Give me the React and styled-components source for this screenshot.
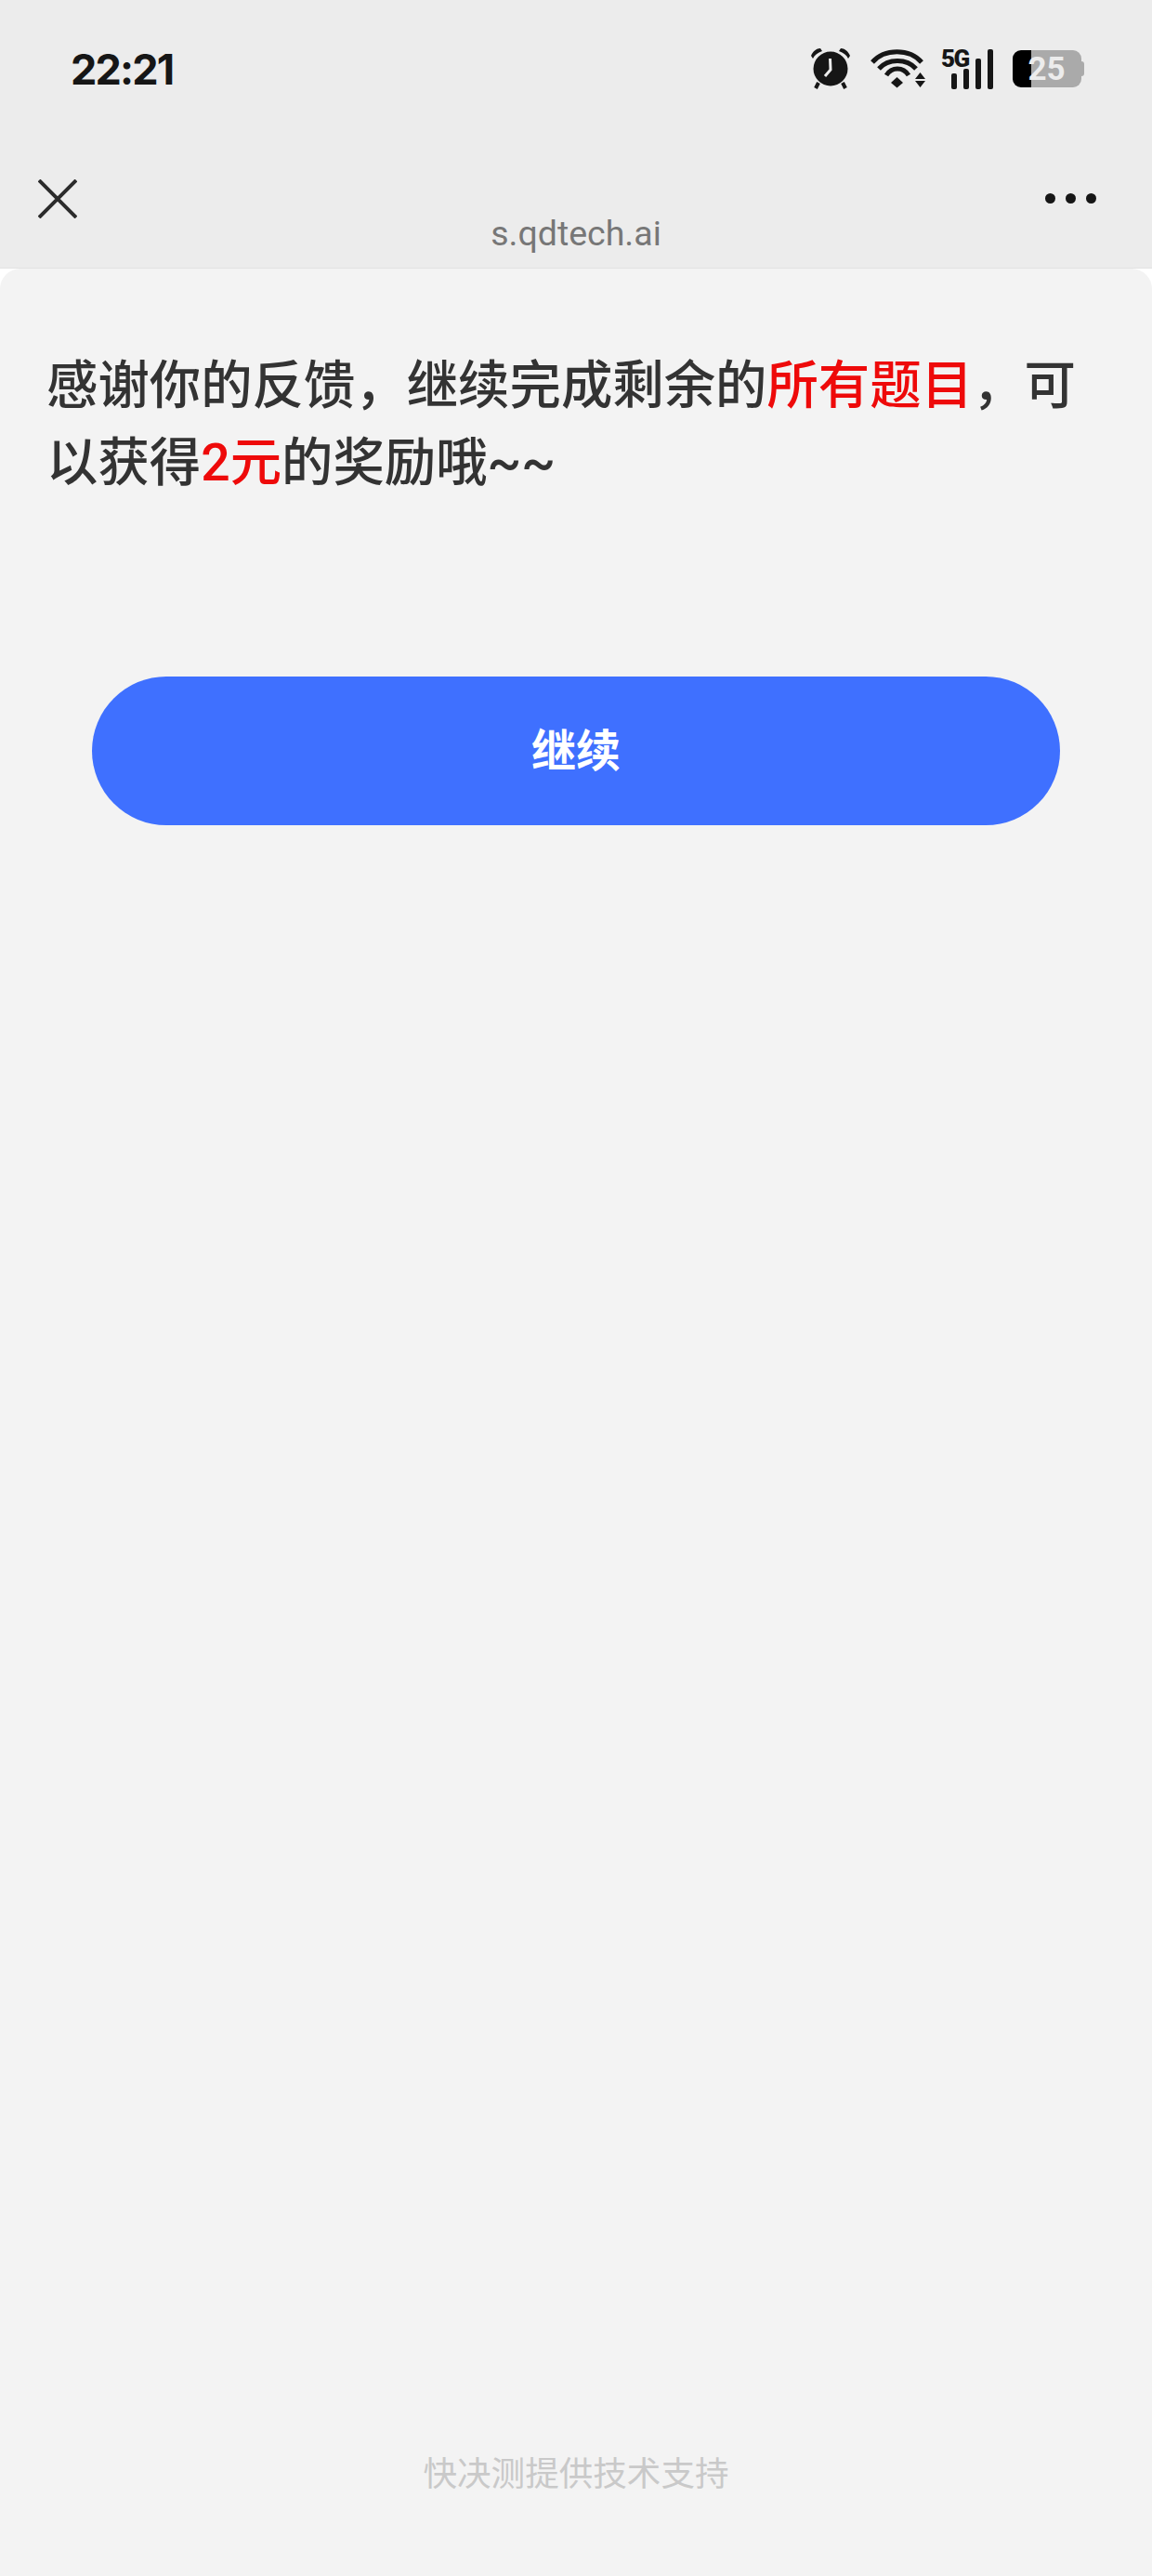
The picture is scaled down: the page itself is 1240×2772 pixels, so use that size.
import React from 'react'
import styled, { createGlobalStyle } from 'styled-components'

const GlobalStyle = createGlobalStyle`
  html, body {
    margin: 0;
    padding: 0;
    background: #ffffff;
  }
`

const CJK = `"Noto Sans CJK SC", Roboto, sans-serif`

const AlarmIcon = () => (
  <svg width="46" height="44" viewBox="0 0 46 44">
    <circle cx="23" cy="22" r="18.5" fill="#161616" />
    <path d="M22.5 11 L23 23 L17 30" fill="none" stroke="#ececec" strokeWidth="3" />
    <path d="M2 8 C4 3 8 0 12 0 L14 3 C9 5 6 7 4 11 Z" fill="#161616" />
    <path d="M44 8 C42 3 38 0 34 0 L32 3 C37 5 40 7 42 11 Z" fill="#161616" />
    <path d="M10 37 L7 43 M36 37 L39 43" stroke="#161616" strokeWidth="4" />
  </svg>
)

const WifiIcon = () => (
  <svg width="60" height="44" viewBox="0 0 60 44">
    <g fill="none" stroke="#161616" strokeWidth="5">
      <path d="M2 15 C15 0 42 0 55 15" />
      <path d="M9 22 C19 10.7 39 10.7 49 22" />
      <path d="M17 29 C23 19.7 35 19.7 41 29" />
    </g>
    <path d="M22 37 L28.5 31 L35 37 L28.5 42.5 Z" fill="#161616" />
    <path d="M48 33 L53.5 26 L59 33 Z M48 35 L59 35 L53.5 42 Z" fill="#161616" />
  </svg>
)

const SignalBars = () => (
  <svg width="46" height="43" viewBox="0 0 46 43">
    <rect x="0" y="26" width="6" height="17" rx="2" fill="#161616" />
    <rect x="13" y="21" width="6" height="22" rx="2" fill="#161616" />
    <rect x="26" y="10" width="6" height="33" rx="2" fill="#161616" />
    <rect x="39" y="0" width="6" height="43" rx="2" fill="#161616" />
  </svg>
)

const Page = styled.div`
  width: 1240px;
  height: 2772px;
  display: flex;
  flex-direction: column;
  overflow: hidden;
  background: #ffffff;
`

const Header = styled.header`
  height: 288px;
  flex-shrink: 0;
  display: flex;
  flex-direction: column;
  background: #ececec;
  border-bottom: 1px solid #e2e2e2;
`

const StatusBar = styled.div`
  height: 148px;
  padding: 0 73px 0 76px;
  display: flex;
  justify-content: space-between;
  align-items: center;
`

const Time = styled.div`
  font-family: Inter, Roboto, sans-serif;
  font-size: 45px;
  font-weight: 700;
  letter-spacing: -1.8px;
  color: #161616;
  line-height: 1;
`

const StatusIcons = styled.div`
  display: flex;
  align-items: center;
  gap: 20px;
`

const Cell = styled.div`
  position: relative;
  width: 53px;
  height: 44px;
  display: flex;
  align-items: flex-end;
  justify-content: flex-end;
`

const CellLabel = styled.span`
  position: absolute;
  left: -4px;
  top: -3px;
  font-family: Roboto, sans-serif;
  font-size: 26px;
  font-weight: 900;
  letter-spacing: -1.5px;
  color: #161616;
  line-height: 28px;
`

const BatteryWrap = styled.div`
  display: flex;
  align-items: center;

  &::after {
    content: '';
    width: 3px;
    height: 16px;
    border-radius: 0 3px 3px 0;
    background: #aaaaaa;
  }
`

const Battery = styled.div`
  width: 74px;
  height: 40px;
  border-radius: 9px;
  overflow: hidden;
  background: linear-gradient(to right, #000000 0, #000000 20px, #aaaaaa 20px);
  display: flex;
  align-items: center;
  justify-content: center;
`

const BatteryText = styled.span`
  font-family: Roboto, sans-serif;
  font-size: 35px;
  font-weight: 700;
  color: #ececec;
  line-height: 1;
  margin-left: -1px;
`

const NavBar = styled.div`
  flex: 1;
  padding: 0 60px;
  display: grid;
  grid-template-columns: 1fr auto 1fr;
  align-items: start;
`

const CloseButton = styled.div`
  width: 42px;
  height: 42px;
  margin: 45px 0 0 -19px;
`

const Domain = styled.div`
  margin-top: 81px;
  font-family: Roboto, sans-serif;
  font-size: 37.5px;
  color: #777777;
  line-height: 44px;
`

const MoreDots = styled.div`
  margin-top: 60px;
  justify-self: end;
  display: flex;
  gap: 11px;
`

const Dot = styled.span`
  width: 11px;
  height: 11px;
  border-radius: 50%;
  background: #161616;
`

const Card = styled.main`
  flex: 1;
  display: flex;
  flex-direction: column;
  background: #f3f3f3;
  border-radius: 22px 22px 0 0;
`

const Message = styled.p`
  margin: 0;
  padding: 85px 50px 0 50px;
  font-family: Roboto, ${CJK};
  font-size: 55.4px;
  font-weight: 500;
  line-height: 83px;
  color: #333333;
`

const Highlight = styled.span`
  color: #ee0a0a;
`

const ContinueButton = styled.button`
  display: block;
  width: 1042px;
  height: 160px;
  margin: 188px auto 0;
  padding: 0 0 8px;
  border: 0;
  border-radius: 80px;
  background: #3f70ff;
  font-family: ${CJK};
  font-size: 48px;
  font-weight: 700;
  color: #ffffff;
`

const Footer = styled.footer`
  margin-top: auto;
  padding-bottom: 89px;
  text-align: center;
  font-family: ${CJK};
  font-size: 36.6px;
  line-height: 46px;
  color: #c9c9c9;
`

const App = () => {
  return (
    <Page>
      <GlobalStyle />
      <Header>
        <StatusBar>
          <Time>22:21</Time>
          <StatusIcons>
            <AlarmIcon />
            <WifiIcon />
            <Cell>
              <CellLabel>5G</CellLabel>
              <SignalBars />
            </Cell>
            <BatteryWrap>
              <Battery>
                <BatteryText>25</BatteryText>
              </Battery>
            </BatteryWrap>
          </StatusIcons>
        </StatusBar>
        <NavBar>
          <CloseButton>
            <svg width="42" height="42" viewBox="0 0 42 42">
              <path d="M1 1 L41 41 M41 1 L1 41" stroke="#2b2b2b" strokeWidth="4" />
            </svg>
          </CloseButton>
          <Domain>s.qdtech.ai</Domain>
          <MoreDots>
            <Dot />
            <Dot />
            <Dot />
          </MoreDots>
        </NavBar>
      </Header>
      <Card>
        <Message>
          感谢你的反馈，继续完成剩余的<Highlight>所有题目</Highlight>，可以获得<Highlight>2元</Highlight>的奖励哦~~
        </Message>
        <ContinueButton>继续</ContinueButton>
        <Footer>快决测提供技术支持</Footer>
      </Card>
    </Page>
  )
}

export default App
